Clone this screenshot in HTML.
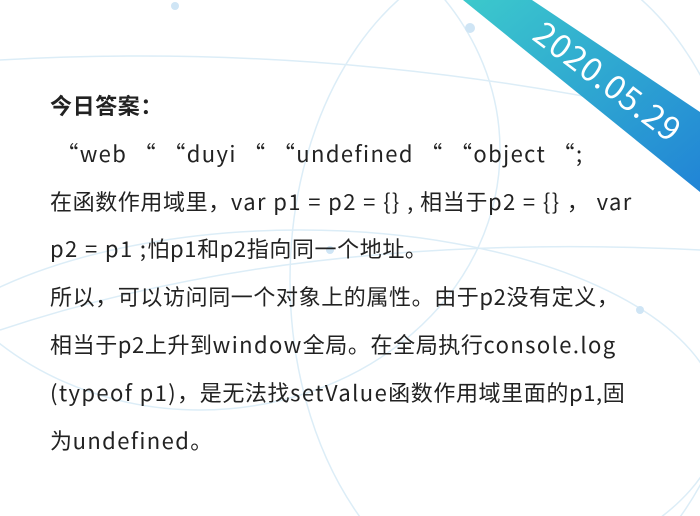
<html style="overflow:hidden"><head><style>
body{margin:0;width:700px;height:516px;background:#fff;position:relative;overflow:hidden;font-family:"Noto Sans CJK SC","Liberation Sans",sans-serif;}
.t{position:absolute;left:50px;top:82px;width:650px;font-size:22px;color:#222;line-height:47.8px;white-space:nowrap;letter-spacing:0.6px;}
.t b{font-weight:bold;}
.l{letter-spacing:1.4px;}
</style></head><body>
<svg width="700" height="516" style="position:absolute;left:0;top:0">
<defs><linearGradient id="g" x1="0" y1="0" x2="1" y2="1"><stop offset="0" stop-color="#3cc9cc"/><stop offset="1" stop-color="#2184d6"/></linearGradient></defs>
<g fill="none" stroke="#dcedf7" stroke-width="1.5">
<ellipse cx="300" cy="420" rx="420" ry="190"/>
<ellipse cx="520" cy="280" rx="230" ry="330"/>
<ellipse cx="200" cy="150" rx="300" ry="260"/>
<path d="M0 60 Q350 40 700 120"/>
<path d="M0 330 Q300 230 700 250"/>
</g>
<g fill="#cfe5f5"><circle cx="470" cy="28" r="5"/><circle cx="175" cy="6" r="4"/><circle cx="330" cy="250" r="4"/><circle cx="640" cy="310" r="4"/></g>
<polygon points="463,0 532,0 700,112 700,192" fill="url(#g)"/>
<text x="0" y="0" transform="translate(606,84) rotate(37)" text-anchor="middle" dominant-baseline="middle" fill="#fff" font-size="33" font-family="Noto Sans CJK SC,Liberation Sans,sans-serif" letter-spacing="1">2020.05.29</text>
</svg>
<div class="t"><b>今日答案：</b><br><span class="l">&nbsp;“web “ “duyi “ “undefined “ “object “;</span><br>在函数作用域里，<span class="l">var p1 = p2 = {} ,</span> 相当于<span class="l">p2 = {} ， var</span><br><span class="l">p2 = p1 ;</span>怕p1和p2指向同一个地址。<br>所以，可以访问同一个对象上的属性。由于p2没有定义，<br>相当于p2上升到<span class="l">window</span>全局。在全局执行<span class="l">console.log</span><br><span class="l">(typeof p1)</span>，是无法找<span class="l">setValue</span>函数作用域里面的p1,固<br>为<span class="l">undefined</span>。</div>
</body></html>
